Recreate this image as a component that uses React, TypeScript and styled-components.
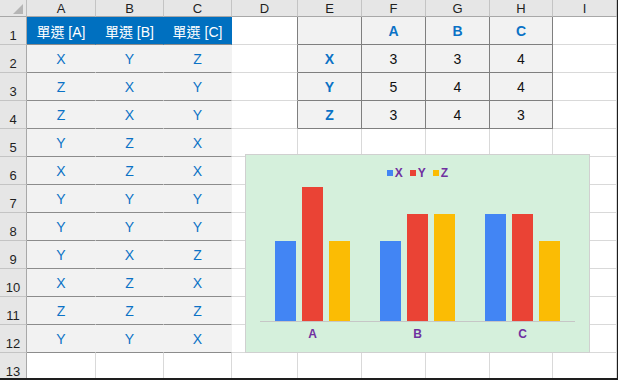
import styled, {createGlobalStyle, css} from 'styled-components';

/* -------------------------------------------------------------------------- */
/*                                   Styles                                   */
/* -------------------------------------------------------------------------- */
const BLUE = '#0070c0';
const INK = '#0b72c6';
const PURPLE = '#7030a0';
const GRID = '#d9d9d9';
const RULE = '#8c8c8c';

const GlobalStyle = createGlobalStyle`
  html, body {
    margin: 0;
    padding: 0;
    background: #fff;
    overflow: hidden;
  }
  body {
    font-family: 'Liberation Sans', 'Noto Sans CJK TC', Arial, sans-serif;
  }
`;

const Sheet = styled.div`
  position: relative;
  width: 618px;
  height: 380px;
  box-sizing: border-box;
  border-right: 1px solid #1e1e1e;
  border-bottom: 2px solid #1e1e1e;
  overflow: hidden;
  display: grid;
  grid-template-columns: 27px 69px 68px 68px 66px 64px 64px 64px 63px 1fr;
  grid-template-rows: 17px repeat(13, 28px);
`;

const Corner = styled.div`
  display: flex;
  align-items: flex-end;
  justify-content: flex-end;
  padding: 0 3px 2px 0;
  box-sizing: border-box;
  background: #e6e6e6;
  border-right: 1px solid #bdbdbd;
  border-bottom: 1px solid #a8a8a8;
`;

const ColHead = styled.div`
  display: flex;
  align-items: center;
  justify-content: center;
  box-sizing: border-box;
  background: #e6e6e6;
  border-right: 1px solid #c4c4c4;
  border-bottom: 1px solid #a8a8a8;
  font-size: 13px;
  color: #1f1f1f;
`;

const RowHead = styled.div`
  display: flex;
  align-items: flex-end;
  justify-content: center;
  padding-bottom: 1px;
  box-sizing: border-box;
  background: #e6e6e6;
  border-right: 1px solid #a8a8a8;
  border-bottom: 1px solid #c4c4c4;
  font-size: 13px;
  color: #1f1f1f;
`;

type Kind = 'blank' | 'edge' | 'title' | 'pick' | 'box' | 'key';

const kinds: Record<Kind, ReturnType<typeof css>> = {
  blank: css`
    background: #fff;
    border-right: 1px solid ${GRID};
    border-bottom: 1px solid ${GRID};
  `,
  edge: css`
    background: #fff;
    border-right: 1px solid #7f7f7f;
    border-bottom: 1px solid ${GRID};
  `,
  title: css`
    background: ${BLUE};
    color: #fff;
    border-right: 1px solid ${BLUE};
    border-bottom: 1px solid ${RULE};
  `,
  pick: css`
    background: #f2f2f2;
    color: ${INK};
    border-right: 1px solid #f2f2f2;
    border-bottom: 1px solid ${RULE};
  `,
  box: css`
    background: #f2f2f2;
    color: #111;
    border-right: 1px solid #7f7f7f;
    border-bottom: 1px solid #7f7f7f;
  `,
  key: css`
    background: #f2f2f2;
    color: ${INK};
    font-weight: 700;
    border-right: 1px solid #7f7f7f;
    border-bottom: 1px solid #7f7f7f;
  `,
};

const Cell = styled.div<{$kind: Kind}>`
  display: flex;
  align-items: center;
  justify-content: center;
  box-sizing: border-box;
  font-size: 14px;
  white-space: nowrap;
  ${({$kind}) => kinds[$kind]}
`;

const Chart = styled.div`
  position: absolute;
  left: 245px;
  top: 154px;
  width: 345px;
  height: 199px;
  box-sizing: border-box;
  display: flex;
  flex-direction: column;
  padding: 10px 0 0 14px;
  background: #d5f0dc;
  border: 1px solid #d0d0d0;
`;

const Legend = styled.div`
  display: flex;
  justify-content: center;
  align-items: center;
  column-gap: 7px;
  height: 16px;
  margin-right: 14px;
`;

const LegendItem = styled.span<{$color: string}>`
  display: flex;
  align-items: center;
  column-gap: 2px;
  font-size: 12px;
  font-weight: 700;
  color: ${PURPLE};

  &::before {
    content: '';
    width: 6px;
    height: 6px;
    background: ${({$color}) => $color};
  }
`;

const Plot = styled.div`
  display: flex;
  width: 315px;
  height: 140px;
  border-bottom: 1px solid #c6c6c6;
`;

const Group = styled.div`
  flex: 1;
  display: flex;
  align-items: flex-end;
  justify-content: center;
  column-gap: 6px;
`;

const Bar = styled.div<{$color: string; $value: number}>`
  width: 21px;
  height: ${({$value}) => Math.round($value * 26.8)}px;
  background: ${({$color}) => $color};
`;

const Labels = styled.div`
  display: flex;
  width: 315px;
  margin-top: 5px;
`;

const Label = styled.span`
  flex: 1;
  text-align: center;
  font-size: 12px;
  font-weight: 700;
  color: ${PURPLE};
`;

/* -------------------------------------------------------------------------- */
/*                                    Data                                    */
/* -------------------------------------------------------------------------- */
const COLUMNS = ['A', 'B', 'C', 'D', 'E', 'F', 'G', 'H', 'I'];

const PICKS = [
  'XYZ', 'ZXY', 'ZXY', 'YZX', 'XZX', 'YYY', 'YYY', 'YXZ', 'XZX', 'ZZZ', 'YYX',
];

const TALLY = [
  ['', 'A', 'B', 'C'],
  ['X', '3', '3', '4'],
  ['Y', '5', '4', '4'],
  ['Z', '3', '4', '3'],
];

const SERIES = [
  {name: 'X', color: '#4285f4'},
  {name: 'Y', color: '#ea4335'},
  {name: 'Z', color: '#fbbc04'},
];

const GROUPS = [
  {name: 'A', values: [3, 5, 3]},
  {name: 'B', values: [3, 4, 4]},
  {name: 'C', values: [4, 4, 3]},
];

const cellAt = (row: number, col: number): {kind: Kind; text: string} => {
  if (col < 3) {
    if (row === 1) return {kind: 'title', text: `單選 [${COLUMNS[col]}]`};
    if (row <= 12) return {kind: 'pick', text: PICKS[row - 2][col]};
    return {kind: 'blank', text: ''};
  }
  if (row <= 4) {
    if (col === 3) return {kind: 'edge', text: ''};
    if (col <= 7) {
      const text = TALLY[row - 1][col - 4];
      const isKey = row === 1 || col === 4;
      return {kind: isKey && text ? 'key' : 'box', text};
    }
  }
  return {kind: 'blank', text: ''};
};

/* -------------------------------------------------------------------------- */
/*                                     App                                    */
/* -------------------------------------------------------------------------- */
const App = () => (
  <>
    <GlobalStyle />
    <Sheet>
      <Corner>
        <svg width="10" height="10" viewBox="0 0 10 10">
          <path d="M10 0 L10 10 L0 10 Z" fill="#b5b5b5" />
        </svg>
      </Corner>
      {COLUMNS.map(c => (
        <ColHead key={c}>{c}</ColHead>
      ))}
      {Array.from({length: 13}, (_, i) => i + 1).map(row => [
        <RowHead key={`h${row}`}>{row}</RowHead>,
        ...COLUMNS.map((c, col) => {
          const {kind, text} = cellAt(row, col);
          return (
            <Cell key={`${c}${row}`} $kind={kind}>
              {text}
            </Cell>
          );
        }),
      ])}

      <Chart>
        <Legend>
          {SERIES.map(s => (
            <LegendItem key={s.name} $color={s.color}>
              {s.name}
            </LegendItem>
          ))}
        </Legend>
        <Plot>
          {GROUPS.map(g => (
            <Group key={g.name}>
              {g.values.map((v, i) => (
                <Bar key={SERIES[i].name} $color={SERIES[i].color} $value={v} />
              ))}
            </Group>
          ))}
        </Plot>
        <Labels>
          {GROUPS.map(g => (
            <Label key={g.name}>{g.name}</Label>
          ))}
        </Labels>
      </Chart>
    </Sheet>
  </>
);

export default App;
